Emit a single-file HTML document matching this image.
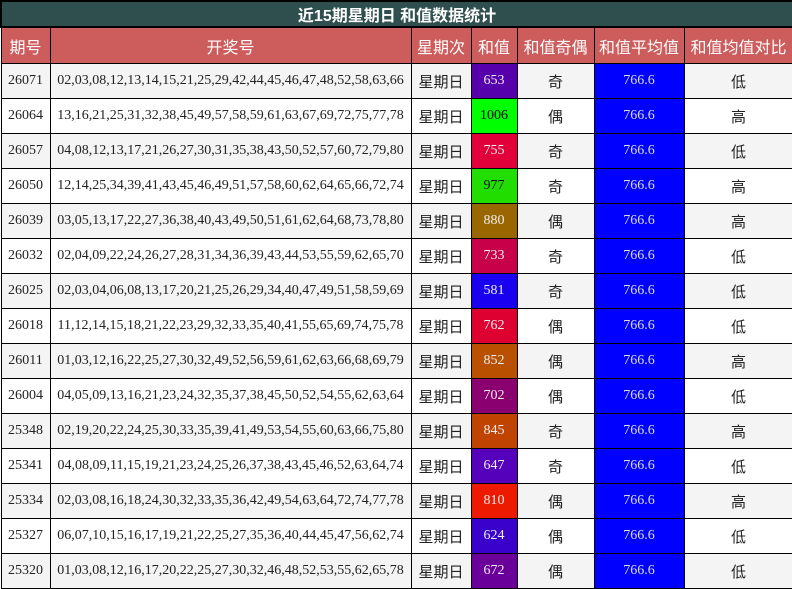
<!DOCTYPE html>
<html><head><meta charset="utf-8"><style>
body{margin:0;width:792px;height:589px;overflow:hidden;background:#fff;font-family:"Liberation Serif","Noto Sans CJK SC",serif;}
table{border-collapse:collapse;width:792px;table-layout:fixed;}
td,th{border:1px solid #000;text-align:center;padding:0;font-size:14px;color:#222;}
.t{background:#2f4f4f;color:#fff;font-weight:bold;font-size:16px;height:22px;font-family:"Liberation Sans","Noto Sans CJK SC",sans-serif;border:2px solid #000}
th{background:#cd5c5c;color:#fff;font-weight:normal;font-size:16px;height:35px;font-family:"Liberation Sans","Noto Sans CJK SC",sans-serif}
td{height:34px}
tr.o td{background:#f4f4f4}
.c{font-family:"Liberation Sans","Noto Sans CJK SC",sans-serif;font-size:15px}
.v{color:#eee}
.a{background:#0000ff !important;color:#ddd}
</style></head><body>
<table>
<colgroup><col style="width:49px"><col style="width:361px"><col style="width:60px"><col style="width:46px"><col style="width:77px"><col style="width:90px"><col style="width:109px"></colgroup>
<tr><td colspan="7" class="t">近15期星期日 和值数据统计</td></tr>
<tr><th>期号</th><th>开奖号</th><th>星期次</th><th>和值</th><th>和值奇偶</th><th>和值平均值</th><th>和值均值对比</th></tr>
<tr class="o"><td>26071</td><td>02,03,08,12,13,14,15,21,25,29,42,44,45,46,47,48,52,58,63,66</td><td class="c">星期日</td><td class="v" style="background:#5500aa">653</td><td class="c">奇</td><td class="a">766.6</td><td class="c">低</td></tr>
<tr><td>26064</td><td>13,16,21,25,31,32,38,45,49,57,58,59,61,63,67,69,72,75,77,78</td><td class="c">星期日</td><td style="background:#00ff00;color:#000">1006</td><td class="c">偶</td><td class="a">766.6</td><td class="c">高</td></tr>
<tr class="o"><td>26057</td><td>04,08,12,13,17,21,26,27,30,31,35,38,43,50,52,57,60,72,79,80</td><td class="c">星期日</td><td class="v" style="background:#e2003a">755</td><td class="c">奇</td><td class="a">766.6</td><td class="c">低</td></tr>
<tr><td>26050</td><td>12,14,25,34,39,41,43,45,46,49,51,57,58,60,62,64,65,66,72,74</td><td class="c">星期日</td><td style="background:#22dd00;color:#111">977</td><td class="c">奇</td><td class="a">766.6</td><td class="c">高</td></tr>
<tr class="o"><td>26039</td><td>03,05,13,17,22,27,36,38,40,43,49,50,51,61,62,64,68,73,78,80</td><td class="c">星期日</td><td class="v" style="background:#9a6600">880</td><td class="c">偶</td><td class="a">766.6</td><td class="c">高</td></tr>
<tr><td>26032</td><td>02,04,09,22,24,26,27,28,31,34,36,39,43,44,53,55,59,62,65,70</td><td class="c">星期日</td><td class="v" style="background:#c8004a">733</td><td class="c">奇</td><td class="a">766.6</td><td class="c">低</td></tr>
<tr class="o"><td>26025</td><td>02,03,04,06,08,13,17,20,21,25,26,29,34,40,47,49,51,58,59,69</td><td class="c">星期日</td><td class="v" style="background:#1a00f0">581</td><td class="c">奇</td><td class="a">766.6</td><td class="c">低</td></tr>
<tr><td>26018</td><td>11,12,14,15,18,21,22,23,29,32,33,35,40,41,55,65,69,74,75,78</td><td class="c">星期日</td><td class="v" style="background:#dd0030">762</td><td class="c">偶</td><td class="a">766.6</td><td class="c">低</td></tr>
<tr class="o"><td>26011</td><td>01,03,12,16,22,25,27,30,32,49,52,56,59,61,62,63,66,68,69,79</td><td class="c">星期日</td><td class="v" style="background:#b85000">852</td><td class="c">偶</td><td class="a">766.6</td><td class="c">高</td></tr>
<tr><td>26004</td><td>04,05,09,13,16,21,23,24,32,35,37,38,45,50,52,54,55,62,63,64</td><td class="c">星期日</td><td class="v" style="background:#8a0070">702</td><td class="c">偶</td><td class="a">766.6</td><td class="c">低</td></tr>
<tr class="o"><td>25348</td><td>02,19,20,22,24,25,30,33,35,39,41,49,53,54,55,60,63,66,75,80</td><td class="c">星期日</td><td class="v" style="background:#c04400">845</td><td class="c">奇</td><td class="a">766.6</td><td class="c">高</td></tr>
<tr><td>25341</td><td>04,08,09,11,15,19,21,23,24,25,26,37,38,43,45,46,52,63,64,74</td><td class="c">星期日</td><td class="v" style="background:#5500bb">647</td><td class="c">奇</td><td class="a">766.6</td><td class="c">低</td></tr>
<tr class="o"><td>25334</td><td>02,03,08,16,18,24,30,32,33,35,36,42,49,54,63,64,72,74,77,78</td><td class="c">星期日</td><td class="v" style="background:#ee1a00">810</td><td class="c">偶</td><td class="a">766.6</td><td class="c">高</td></tr>
<tr><td>25327</td><td>06,07,10,15,16,17,19,21,22,25,27,35,36,40,44,45,47,56,62,74</td><td class="c">星期日</td><td class="v" style="background:#3a00cc">624</td><td class="c">偶</td><td class="a">766.6</td><td class="c">低</td></tr>
<tr class="o"><td>25320</td><td>01,03,08,12,16,17,20,22,25,27,30,32,46,48,52,53,55,62,65,78</td><td class="c">星期日</td><td class="v" style="background:#6a0099">672</td><td class="c">偶</td><td class="a">766.6</td><td class="c">低</td></tr>
</table>
</body></html>
